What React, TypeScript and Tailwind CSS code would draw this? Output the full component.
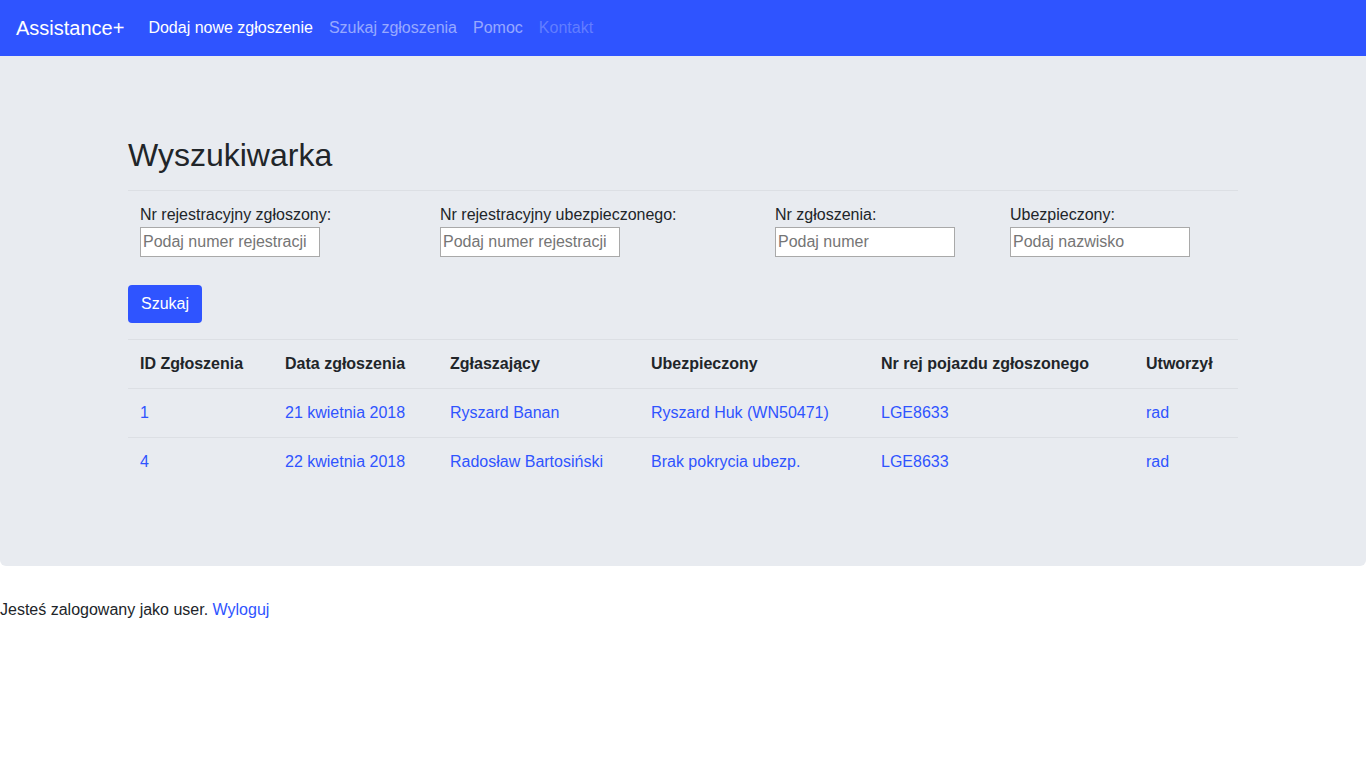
export default function App() {
  const fields = [
    { label: "Nr rejestracyjny zgłoszony:", placeholder: "Podaj numer rejestracji" },
    { label: "Nr rejestracyjny ubezpieczonego:", placeholder: "Podaj numer rejestracji" },
    { label: "Nr zgłoszenia:", placeholder: "Podaj numer" },
    { label: "Ubezpieczony:", placeholder: "Podaj nazwisko" },
  ]

  const rows = [
    ["1", "21 kwietnia 2018", "Ryszard Banan", "Ryszard Huk (WN50471)", "LGE8633", "rad"],
    ["4", "22 kwietnia 2018", "Radosław Bartosiński", "Brak pokrycia ubezp.", "LGE8633", "rad"],
  ]

  const headers = ["ID Zgłoszenia", "Data zgłoszenia", "Zgłaszający", "Ubezpieczony", "Nr rej pojazdu zgłoszonego", "Utworzył"]
  const colWidths = "grid-cols-[145px_165px_201px_230px_265px_1fr]"

  return (
    <div className="min-h-screen bg-white text-[#212529] font-['Liberation_Sans',Arial,sans-serif] text-base">
      {/* Navbar */}
      <nav className="h-14 bg-[#2f54ff] flex items-center px-4">
        <a className="text-white text-xl mr-6">Assistance+</a>
        <div className="flex items-center gap-4">
          <a className="text-white">Dodaj nowe zgłoszenie</a>
          <a className="text-white/50">Szukaj zgłoszenia</a>
          <a className="text-white/50">Pomoc</a>
          <a className="text-white/25">Kontakt</a>
        </div>
      </nav>

      {/* Jumbotron */}
      <div className="bg-[#e8ebf0] rounded-b-md pt-20 pb-20">
        <div className="w-[1110px] mx-auto">
          <h2 className="text-[32px] leading-[38px] mb-4">Wyszukiwarka</h2>
          <hr className="border-t border-[#dcdfe4]" />

          <div className="grid grid-cols-[300px_335px_235px_1fr] pl-3 pt-[11px]">
            {fields.map((f) => (
              <div key={f.label} className="flex flex-col">
                <label className="leading-[25px]">{f.label}</label>
                <input
                  placeholder={f.placeholder}
                  className="w-[180px] h-[30px] bg-white border border-[#a9a9a9] px-[2px] placeholder:text-[#757575] text-base"
                />
              </div>
            ))}
          </div>

          <button className="mt-7 bg-[#2f54ff] text-white rounded-[4px] h-[38px] px-[13px] leading-6">Szukaj</button>

          {/* Table */}
          <div className="mt-4 border-t border-[#dcdfe4]">
            <div className={`grid ${colWidths} border-b border-[#dcdfe4]`}>
              {headers.map((h) => (
                <div key={h} className="px-3 py-3 font-bold leading-6">{h}</div>
              ))}
            </div>
            {rows.map((r, i) => (
              <div key={i} className={`grid ${colWidths} ${i < rows.length - 1 ? "border-b border-[#dcdfe4]" : ""}`}>
                {r.map((c, j) => (
                  <a key={j} className="px-3 py-3 leading-6 text-[#2f54ff]">{c}</a>
                ))}
              </div>
            ))}
          </div>
        </div>
      </div>

      <p className="mt-8 leading-6">
        Jesteś zalogowany jako user. <a className="text-[#2f54ff]">Wyloguj</a>
      </p>
    </div>
  )
}
